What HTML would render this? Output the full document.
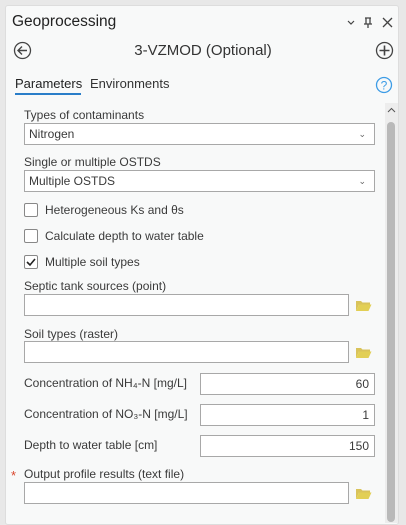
<!DOCTYPE html>
<html><head><style>
*{box-sizing:border-box;margin:0;padding:0}
body{width:406px;height:512px;background:#e8e8e8;font-family:"Liberation Sans",sans-serif;color:#3a3a3a;position:relative;overflow:hidden;font-size:12px}
.panel{position:absolute;left:5px;top:5px;width:394px;height:520px;background:#f8f9f9;border:1px solid #ddd;border-radius:3px}
.a{position:absolute;white-space:nowrap}
.box{position:absolute;background:#fff;border:1px solid #a8a8a8}
.chev{position:absolute;right:8px;top:5px;font-size:9px;color:#666}
.cb{position:absolute;left:24px;width:14px;height:14px;border:1px solid #888;border-radius:2px;background:#fff}
.num{position:absolute;right:5px;top:3px}
</style></head><body>
<div class="panel"></div>
<div class="a" style="left:12px;top:13px;font-size:15.5px;color:#222">Geoprocessing</div>
<svg class="a" style="left:346px;top:17px" width="50" height="12" viewBox="0 0 50 12"><path d="M2 4l3 3 3-3" stroke="#444" fill="none" stroke-width="1.2"/><path d="M19 1h6M20 1v6h4V1M18 7h8M22 7v4" stroke="#444" fill="none" stroke-width="1.3"/><path d="M37 1l9 9M46 1l-9 9" stroke="#444" stroke-width="1.3"/></svg>
<svg class="a" style="left:13px;top:41px" width="19" height="19"><circle cx="9.5" cy="9.5" r="8" stroke="#444" fill="none" stroke-width="1.3"/><path d="M14 9.5H5M9 5.5l-4 4 4 4" stroke="#444" fill="none" stroke-width="1.4"/></svg>
<div class="a" style="left:0;width:406px;text-align:center;top:42px;font-size:15px;color:#333">3-VZMOD (Optional)</div>
<svg class="a" style="left:375px;top:41px" width="19" height="19"><circle cx="9.5" cy="9.5" r="8" stroke="#444" fill="none" stroke-width="1.3"/><path d="M9.5 4.5v10M4.5 9.5h10" stroke="#444" stroke-width="1.6"/></svg>
<div class="a" style="left:15px;top:76px;font-size:13px;color:#222">Parameters</div>
<div class="a" style="left:15px;top:93px;width:66px;height:2px;background:#2a7ec9"></div>
<div class="a" style="left:90px;top:76px;font-size:13px;color:#333">Environments</div>
<svg class="a" style="left:375px;top:76px" width="18" height="18"><circle cx="9" cy="9" r="7.5" stroke="#3d9ce6" fill="none" stroke-width="1.3"/><text x="9" y="13.5" text-anchor="middle" font-size="12" fill="#3d9ce6" font-family="Liberation Sans">?</text></svg>
<div class="a" style="left:385px;top:103px;width:13px;height:420px;background:#ededed"></div>
<svg class="a" style="left:387px;top:107px" width="9" height="6"><path d="M1 5l3.5-3.5L8 5" stroke="#555" fill="none"/></svg>
<div class="a" style="left:387px;top:122px;width:8px;height:400px;background:#b9b9b9;border-radius:4px"></div>

<div class="a" style="left:24px;top:108px">Types of contaminants</div>
<div class="box" style="left:24px;top:123px;width:351px;height:22px"><span class="a" style="left:4px;top:3px">Nitrogen</span><span class="chev">&#8964;</span></div>
<div class="a" style="left:24px;top:155px">Single or multiple OSTDS</div>
<div class="box" style="left:24px;top:170px;width:351px;height:22px"><span class="a" style="left:4px;top:3px">Multiple OSTDS</span><span class="chev">&#8964;</span></div>

<div class="cb" style="top:203px"></div><div class="a" style="left:45px;top:203px">Heterogeneous Ks and θs</div>
<div class="cb" style="top:229px"></div><div class="a" style="left:45px;top:229px">Calculate depth to water table</div>
<div class="cb" style="top:255px"><svg width="12" height="12" style="position:absolute;left:0;top:0"><path d="M2 6l3 3 5-6" stroke="#222" fill="none" stroke-width="1.6"/></svg></div><div class="a" style="left:45px;top:255px">Multiple soil types</div>

<div class="a" style="left:24px;top:279px">Septic tank sources (point)</div>
<div class="box" style="left:24px;top:294px;width:325px;height:22px"></div>
<svg class="a" style="left:355px;top:299px" width="17" height="13"><path d="M1 2h5l1.5 1.5H15v2H4L1 12z" fill="#d9c35a"/><path d="M4 5.5h12.5L13.5 12H1z" fill="#e2cf55"/></svg>
<div class="a" style="left:24px;top:327px">Soil types (raster)</div>
<div class="box" style="left:24px;top:341px;width:325px;height:22px"></div>
<svg class="a" style="left:355px;top:346px" width="17" height="13"><path d="M1 2h5l1.5 1.5H15v2H4L1 12z" fill="#d9c35a"/><path d="M4 5.5h12.5L13.5 12H1z" fill="#e2cf55"/></svg>

<div class="a" style="left:24px;top:376px">Concentration of NH₄-N [mg/L]</div>
<div class="box" style="left:200px;top:373px;width:175px;height:22px"><span class="num">60</span></div>
<div class="a" style="left:24px;top:407px">Concentration of NO₃-N [mg/L]</div>
<div class="box" style="left:200px;top:404px;width:175px;height:22px"><span class="num">1</span></div>
<div class="a" style="left:24px;top:438px">Depth to water table [cm]</div>
<div class="box" style="left:200px;top:435px;width:175px;height:22px"><span class="num">150</span></div>

<div class="a" style="left:11px;top:468px;color:#d9452c;font-size:13px">*</div>
<div class="a" style="left:24px;top:467px">Output profile results (text file)</div>
<div class="box" style="left:24px;top:482px;width:325px;height:22px"></div>
<svg class="a" style="left:355px;top:487px" width="17" height="13"><path d="M1 2h5l1.5 1.5H15v2H4L1 12z" fill="#d9c35a"/><path d="M4 5.5h12.5L13.5 12H1z" fill="#e2cf55"/></svg>
</body></html>
